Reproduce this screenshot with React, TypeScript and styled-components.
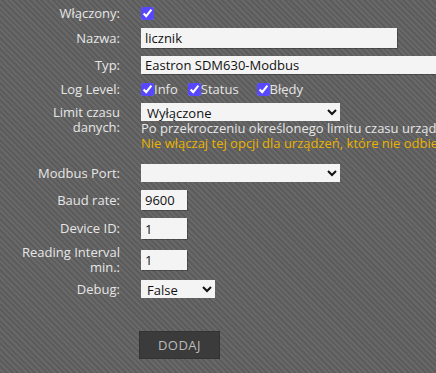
import { FC } from "react";
import styled, { createGlobalStyle } from "styled-components";

const GlobalStyle = createGlobalStyle`
	html, body {
		margin: 0;
		padding: 0;
	}

	body {
		background-color: #636363;
		background-image: repeating-linear-gradient(
			45deg,
			rgba(0, 0, 0, 0.07) 0px,
			rgba(0, 0, 0, 0.07) 2px,
			rgba(255, 255, 255, 0.03) 2px,
			rgba(255, 255, 255, 0.03) 4px
		);
		font-family: "Open Sans", "DejaVu Sans", sans-serif;
		font-size: 13px;
		color: #e6e6e6;
		overflow: hidden;
		width: 436px;
		height: 373px;
	}
`;

const StyledForm = styled.form`
	display: flex;
	flex-direction: column;
	padding-top: 6px;
	width: 436px;
	overflow: hidden;
`;

const StyledRow = styled.div<{ $top?: number; $start?: boolean }>`
	display: flex;
	align-items: ${(props) => (props.$start ? "flex-start" : "center")};
	margin-top: ${(props) => props.$top ?? 0}px;
	column-gap: 21px;
`;

const StyledLabel = styled.label<{ $offset?: number }>`
	flex: 0 0 120px;
	text-align: right;
	line-height: 15px;
	padding-top: ${(props) => props.$offset ?? 0}px;
	color: #e6e6e6;
`;

const StyledField = styled.div`
	display: flex;
	flex-direction: column;
	min-width: 0;
	flex: 1;
`;

const StyledCheckbox = styled.input`
	accent-color: #5748ff;
	width: 13px;
	height: 13px;
	margin: 0;
`;

const StyledInput = styled.input<{ $width: number; $height: number }>`
	box-sizing: border-box;
	width: ${(props) => props.$width}px;
	height: ${(props) => props.$height}px;
	background: #f4f4f4;
	border: none;
	box-shadow: 1px 1px 0 rgba(0, 0, 0, 0.25);
	padding: 0 4px;
	font-family: inherit;
	font-size: 13px;
	color: #111;
	outline: none;
`;

const StyledSelect = styled.select<{ $width: number }>`
	box-sizing: border-box;
	width: ${(props) => props.$width}px;
	height: 18px;
	background: #f4f4f4;
	border: none;
	border-radius: 0;
	padding: 0 2px;
	font-family: inherit;
	font-size: 13px;
	color: #111;
	outline: none;
`;

const StyledChecks = styled.div`
	display: flex;
	align-items: center;
`;

const StyledCheckItem = styled.label<{ $space: number }>`
	display: flex;
	align-items: center;
	margin-right: ${(props) => props.$space}px;
	color: #e6e6e6;
`;

const StyledHint = styled.p<{ $warning?: boolean }>`
	margin: 0;
	white-space: nowrap;
	line-height: 15px;
	color: ${(props) => (props.$warning ? "#e9b300" : "#e6e6e6")};
`;

const StyledSubmitButton = styled.button`
	margin-left: 139px;
	margin-top: 33px;
	width: 81px;
	height: 28px;
	background: #3b3b3b;
	border: 1px solid #333;
	color: #bcbcbc;
	font-family: inherit;
	font-size: 13px;
	letter-spacing: 0.5px;
	cursor: pointer;
`;

const App: FC = () => {
	return (
		<>
			<GlobalStyle />
			<StyledForm onSubmit={(e) => e.preventDefault()}>
				<StyledRow>
					<StyledLabel>Włączony:</StyledLabel>
					<StyledField>
						<StyledCheckbox type="checkbox" defaultChecked />
					</StyledField>
				</StyledRow>
				<StyledRow $top={7}>
					<StyledLabel>Nazwa:</StyledLabel>
					<StyledField>
						<StyledInput defaultValue="licznik" $width={256} $height={20} />
					</StyledField>
				</StyledRow>
				<StyledRow $top={8}>
					<StyledLabel>Typ:</StyledLabel>
					<StyledField>
						<StyledInput
							defaultValue="Eastron SDM630-Modbus"
							$width={300}
							$height={18}
						/>
					</StyledField>
				</StyledRow>
				<StyledRow $top={6}>
					<StyledLabel>Log Level:</StyledLabel>
					<StyledChecks>
						<StyledCheckItem $space={10}>
							<StyledCheckbox type="checkbox" defaultChecked />
							Info
						</StyledCheckItem>
						<StyledCheckItem $space={18}>
							<StyledCheckbox type="checkbox" defaultChecked />
							Status
						</StyledCheckItem>
						<StyledCheckItem $space={0}>
							<StyledCheckbox type="checkbox" defaultChecked />
							Błędy
						</StyledCheckItem>
					</StyledChecks>
				</StyledRow>
				<StyledRow $top={5} $start>
					<StyledLabel $offset={2}>
						Limit czasu
						<br />
						danych:
					</StyledLabel>
					<StyledField>
						<StyledSelect $width={199} defaultValue="off">
							<option value="off">Wyłączone</option>
						</StyledSelect>
						<StyledHint>
							Po przekroczeniu określonego limitu czasu urządzenie zostanie
							oznaczone jako nieaktywne
						</StyledHint>
						<StyledHint $warning>
							Nie włączaj tej opcji dla urządzeń, które nie odbierają danych
							regularnie
						</StyledHint>
					</StyledField>
				</StyledRow>
				<StyledRow $top={13}>
					<StyledLabel>Modbus Port:</StyledLabel>
					<StyledField>
						<StyledSelect $width={199} defaultValue="">
							<option value=""></option>
						</StyledSelect>
					</StyledField>
				</StyledRow>
				<StyledRow $top={8}>
					<StyledLabel>Baud rate:</StyledLabel>
					<StyledField>
						<StyledInput defaultValue="9600" $width={46} $height={20} />
					</StyledField>
				</StyledRow>
				<StyledRow $top={8}>
					<StyledLabel>Device ID:</StyledLabel>
					<StyledField>
						<StyledInput defaultValue="1" $width={46} $height={21} />
					</StyledField>
				</StyledRow>
				<StyledRow $top={6}>
					<StyledLabel>
						Reading Interval
						<br />
						min.:
					</StyledLabel>
					<StyledField>
						<StyledInput defaultValue="1" $width={46} $height={20} />
					</StyledField>
				</StyledRow>
				<StyledRow $top={5}>
					<StyledLabel>Debug:</StyledLabel>
					<StyledField>
						<StyledSelect $width={74} defaultValue="false">
							<option value="false">False</option>
							<option value="true">True</option>
						</StyledSelect>
					</StyledField>
				</StyledRow>
				<StyledSubmitButton type="submit">DODAJ</StyledSubmitButton>
			</StyledForm>
		</>
	);
};

export default App;
